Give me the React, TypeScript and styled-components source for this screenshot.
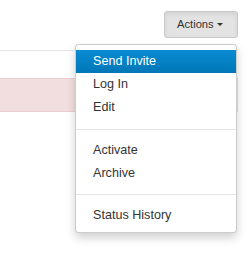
import React from "react";
import styled, { createGlobalStyle } from "styled-components";

const Global = createGlobalStyle`
  html, body { margin: 0; padding: 0; background: #fff; }
  body { font-family: "Liberation Sans", Arial, sans-serif; color: #333; }
`;

const Page = styled.div`
  width: 238px;
  min-height: 268px;
  padding-top: 11px;
  box-sizing: border-box;
`;

const Toolbar = styled.div`
  display: flex;
  justify-content: flex-end;
`;

const Group = styled.div`
  position: relative;
`;

const Button = styled.button`
  display: flex;
  align-items: center;
  gap: 3px;
  height: 27px;
  width: 74px;
  box-sizing: border-box;
  padding: 0 0 1px 12px;
  font-family: "Liberation Sans", Arial, sans-serif;
  font-size: 11.2px;
  color: #333;
  background: #e3e3e3;
  border: 1px solid #c9c9c9;
  border-radius: 3px;
  box-shadow: inset 0 2px 4px rgba(0, 0, 0, 0.08);
`;

const Caret = styled.span`
  width: 0;
  height: 0;
  border-top: 3.5px solid #333;
  border-left: 3.5px solid transparent;
  border-right: 3.5px solid transparent;
  margin-top: 1px;
`;

const Menu = styled.ul`
  position: absolute;
  top: 33px;
  right: 1px;
  z-index: 10;
  width: 162px;
  box-sizing: border-box;
  margin: 0;
  padding: 4.5px 0;
  list-style: none;
  background: #fff;
  border: 1px solid rgba(0, 0, 0, 0.2);
  border-radius: 4px;
  box-shadow: 0 5px 10px rgba(0, 0, 0, 0.18);
`;

const Item = styled.li<{ $active?: boolean }>`
  height: 23.4px;
  line-height: 23.4px;
  padding: 0 17px;
  font-size: 12.6px;
  white-space: nowrap;
  color: ${(p) => (p.$active ? "#fff" : "#333")};
  background: ${(p) =>
    p.$active ? "linear-gradient(#0a8bd2, #0077b7)" : "transparent"};
`;

const Divider = styled.li`
  height: 1px;
  margin: 9px 0;
  background: #e5e5e5;
`;

const Table = styled.div`
  margin-top: 12px;
  border-top: 1px solid #e6e6e6;
`;

const Row = styled.div<{ $danger?: boolean }>`
  height: ${(p) => (p.$danger ? "34px" : "27px")};
  box-sizing: border-box;
  background: ${(p) => (p.$danger ? "#f2dede" : "#fff")};
  border-top: ${(p) => (p.$danger ? "1px solid #ebccd1" : "none")};
  border-bottom: ${(p) => (p.$danger ? "1px solid #ebccd1" : "none")};
`;

export default function App() {
  return (
    <Page>
      <Global />
      <Toolbar>
        <Group>
          <Button>
            Actions <Caret />
          </Button>
          <Menu>
            <Item $active>Send Invite</Item>
            <Item>Log In</Item>
            <Item>Edit</Item>
            <Divider />
            <Item>Activate</Item>
            <Item>Archive</Item>
            <Divider />
            <Item>Status History</Item>
          </Menu>
        </Group>
      </Toolbar>
      <Table>
        <Row />
        <Row $danger />
      </Table>
    </Page>
  );
}
